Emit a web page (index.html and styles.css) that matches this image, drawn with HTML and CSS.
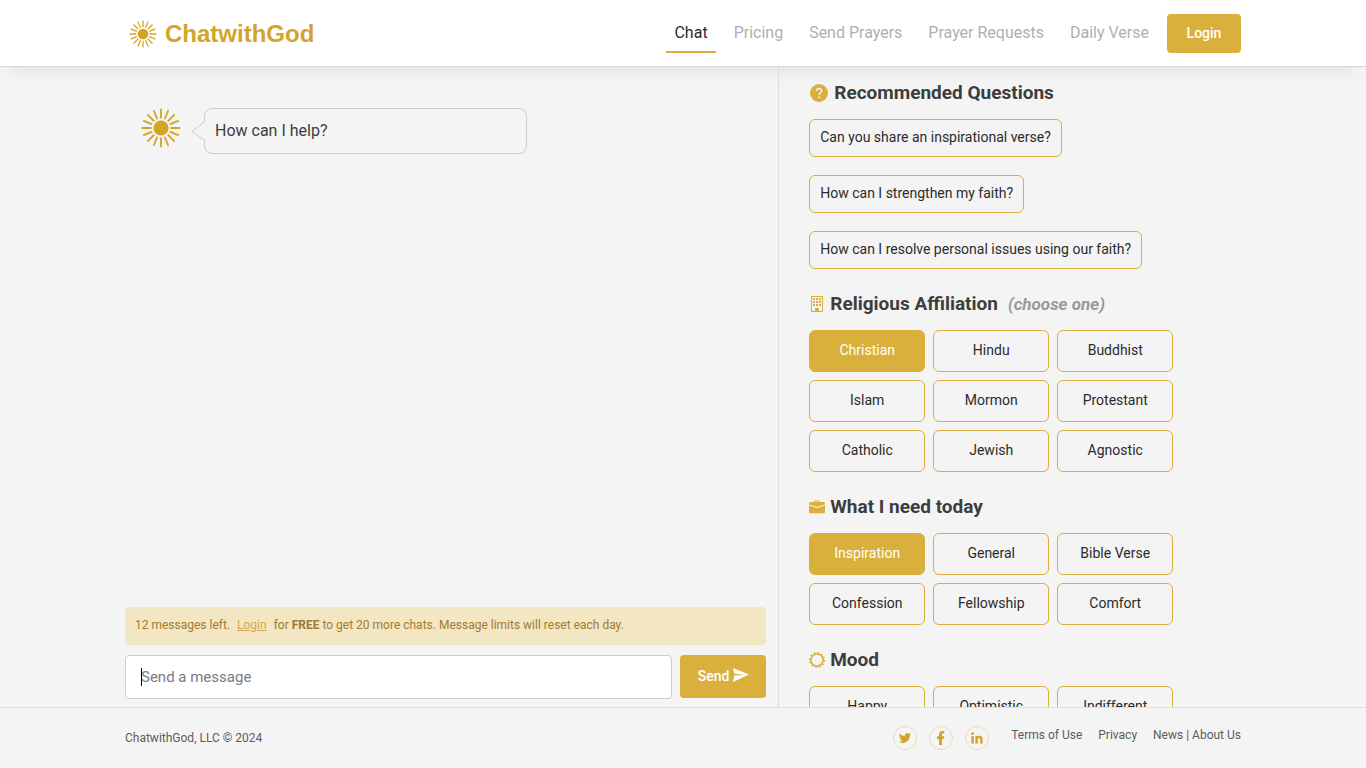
FILE: index.html
```
<!DOCTYPE html>
<html lang="en">
<head>
  <meta charset="UTF-8">
  <meta name="viewport" content="width=device-width, initial-scale=1.0">
  <title>ChatwithGod</title>
  <link rel="stylesheet" href="styles.css">
</head>
<body>
  <svg class="sprite" aria-hidden="true">
    <symbol id="sun" viewBox="0 0 40 40">
      <circle cx="20" cy="20" r="7.6" fill="#d2a424"/>
      <g stroke="#d2a424" stroke-width="1.8">
        <path id="ray" d="M20 .8v9.7M20 29.5v9.7M.8 20h9.7M29.5 20h9.7"/>
        <use href="#ray" transform="rotate(22.5 20 20)"/>
        <use href="#ray" transform="rotate(45 20 20)"/>
        <use href="#ray" transform="rotate(67.5 20 20)"/>
      </g>
    </symbol>
  </svg>

  <header class="header">
    <div class="container header-inner">
      <a href="#" class="logo">
        <svg class="logo-icon"><use href="#sun"/></svg>
        ChatwithGod
      </a>
      <nav class="nav">
        <a href="#" class="nav-link active">Chat</a>
        <a href="#" class="nav-link">Pricing</a>
        <a href="#" class="nav-link">Send Prayers</a>
        <a href="#" class="nav-link">Prayer Requests</a>
        <a href="#" class="nav-link">Daily Verse</a>
        <button type="button" class="btn btn-login">Login</button>
      </nav>
    </div>
  </header>

  <main class="container main">
    <section class="chat">
      <div class="message">
        <svg class="avatar"><use href="#sun"/></svg>
        <div class="bubble">
          <svg class="bubble-arrow" viewBox="0 0 14 20"><path d="M14 .5L.8 10.5L14 19.5" fill="#f4f4f4" stroke="#ccc"/></svg>
          How can I help?
        </div>
      </div>

      <div class="composer">
        <p class="notice">12 messages left. <a href="#">Login</a> for <b>FREE</b> to get 20 more chats. Message limits will reset each day.</p>
        <form class="send-form">
          <div class="send-field">
            <input type="text" class="send-input" placeholder="Send a message" aria-label="Send a message">
          </div>
          <button type="button" class="btn btn-send">Send
            <svg width="16" height="14" viewBox="0 0 16 14"><path d="M0 0L16 6.6L0 14L1.2 7.6L12 6.9L1.2 5.8z" fill="#fff"/></svg>
          </button>
        </form>
      </div>
    </section>

    <aside class="options">
      <h2 class="title title-questions">
        <svg width="18" height="18" viewBox="0 0 18 18"><circle cx="9" cy="9" r="9" fill="#dab03c"/><path d="M6.4 7.1C6.4 3.6 11.6 3.7 11.6 6.8C11.6 8.7 9.1 8.8 9.1 10.9" fill="none" stroke="#f4f4f4" stroke-width="1.5"/><circle cx="9.1" cy="13.2" r="1" fill="#f4f4f4"/></svg>
        Recommended Questions
      </h2>
      <div class="questions">
        <button type="button" class="option">Can you share an inspirational verse?</button>
        <button type="button" class="option">How can I strengthen my faith?</button>
        <button type="button" class="option">How can I resolve personal issues using our faith?</button>
      </div>

      <h2 class="title">
        <svg width="16" height="16" viewBox="0 0 16 16" fill="#dab03c"><path fill-rule="evenodd" d="M2 0h12v16H2zM3 1v14h3v-3h4v3h3V1z"/><path d="M4 2h2v2H4zM7 2h2v2H7zM10 2h2v2h-2zM4 5h2v2H4zM7 5h2v2H7zM10 5h2v2h-2zM4 8h2v2H4zM7 8h2v2H7zM10 8h2v2h-2z"/></svg>
        Religious Affiliation <em>(choose one)</em>
      </h2>
      <div class="grid">
        <button type="button" class="option selected">Christian</button>
        <button type="button" class="option">Hindu</button>
        <button type="button" class="option">Buddhist</button>
        <button type="button" class="option">Islam</button>
        <button type="button" class="option">Mormon</button>
        <button type="button" class="option">Protestant</button>
        <button type="button" class="option">Catholic</button>
        <button type="button" class="option">Jewish</button>
        <button type="button" class="option">Agnostic</button>
      </div>

      <h2 class="title">
        <svg width="16" height="16" viewBox="0 0 16 16" fill="#dab03c"><path d="M5 3V2.5Q5 1.5 6 1.5H10Q11 1.5 11 2.5V3H14.5Q16 3 16 4.5V5.6L8 8L0 5.6V4.5Q0 3 1.5 3zM6 3h4v-.6H6z" fill-rule="evenodd"/><path d="M0 6.6L8 9L16 6.6V13Q16 14.3 14.7 14.3H1.3Q0 14.3 0 13z"/></svg>
        What I need today
      </h2>
      <div class="grid">
        <button type="button" class="option selected">Inspiration</button>
        <button type="button" class="option">General</button>
        <button type="button" class="option">Bible Verse</button>
        <button type="button" class="option">Confession</button>
        <button type="button" class="option">Fellowship</button>
        <button type="button" class="option">Comfort</button>
      </div>

      <h2 class="title">
        <svg width="16" height="16" viewBox="0 0 16 16" fill="none" stroke="#dab03c"><circle cx="8" cy="8" r="6" stroke-width="1.5"/><circle cx="8" cy="8" r="7.2" stroke-width="1.6" stroke-dasharray="1.9 1.87"/></svg>
        Mood
      </h2>
      <div class="grid">
        <button type="button" class="option">Happy</button>
        <button type="button" class="option">Optimistic</button>
        <button type="button" class="option">Indifferent</button>
      </div>
    </aside>
  </main>

  <footer class="footer">
    <div class="container footer-inner">
      <span>ChatwithGod, LLC © 2024</span>
      <div class="footer-right">
        <div class="social">
          <a href="#" aria-label="Twitter"><svg width="12" height="12" viewBox="0 0 24 24"><path d="M24 4.6a10 10 0 0 1-2.8.8 5 5 0 0 0 2.1-2.7 10 10 0 0 1-3.1 1.2 4.9 4.9 0 0 0-8.4 4.5A14 14 0 0 1 1.7 3.1a4.9 4.9 0 0 0 1.5 6.6 5 5 0 0 1-2.2-.6 4.9 4.9 0 0 0 3.9 4.9 5 5 0 0 1-2.2.1 4.9 4.9 0 0 0 4.6 3.4A9.9 9.9 0 0 1 0 19.5a14 14 0 0 0 21.5-12.4A10 10 0 0 0 24 4.6z"/></svg></a>
          <a href="#" aria-label="Facebook"><svg width="8" height="14" viewBox="0 0 8 14"><path d="M2 14V8H0V5.2H2V3.6C2 1.3 3.3 0 5.3 0H7.2V2.6H6C5.1 2.6 4.9 3.1 4.9 3.8V5.2H7.2L6.8 8H4.9V14z"/></svg></a>
          <a href="#" aria-label="LinkedIn"><svg width="12" height="12" viewBox="0 0 12 12"><circle cx="1.6" cy="1.7" r="1.4"/><path d="M.4 4h2.4v7.6H.4zM4.4 4h2.3v1C7.8 3.2 11.6 3.2 11.6 7v4.6H9.2V7.6C9.2 5.3 6.8 5.4 6.8 7.6v4H4.4z"/></svg></a>
        </div>
        <nav class="footer-links">
          <a href="#">Terms of Use</a>
          <a href="#">Privacy</a>
          <span><a href="#">News</a> | <a href="#">About Us</a></span>
        </nav>
      </div>
    </div>
  </footer>
</body>
</html>
```
FILE: styles.css
```
* {
  box-sizing: border-box;
}
body {
  margin: 0;
  height: 100vh;
  display: flex;
  flex-direction: column;
  background: #f4f4f4;
  color: #3d3d3d;
  font-family: Roboto, sans-serif;
  font-size: 16px;
  line-height: 24px;
}
a {
  color: inherit;
  text-decoration: none;
}
button, input {
  font-family: inherit;
}
.sprite {
  position: absolute;
  width: 0;
  height: 0;
}
.container {
  width: 100%;
  max-width: 1140px;
  margin: 0 auto;
  padding: 0 12px;
}

/* header */
.header {
  background: #fff;
  border-bottom: 1px solid #d8d8d8;
  box-shadow: 0 16px 16px -12px rgba(0, 0, 0, 0.08);
}
.header-inner {
  display: flex;
  justify-content: space-between;
  align-items: center;
  height: 66px;
}
.logo {
  display: flex;
  align-items: center;
  gap: 8px;
  padding: 2px 0 0 4px;
  color: #d2a42c;
  font: bold 24px/28px "Liberation Sans", sans-serif;
}
.logo-icon {
  width: 28px;
  height: 28px;
}
.nav {
  display: flex;
  align-items: center;
  gap: 10px;
}
.nav-link {
  padding: 8px 8px 6px;
  border-bottom: 2px solid transparent;
  color: #b0b0b0;
}
.nav-link.active {
  color: #2b2b2b;
  border-color: #dab03c;
}
.btn {
  border: none;
  border-radius: 4px;
  background: #dab03c;
  color: #fff;
  font-size: 14px;
  font-weight: 500;
  cursor: pointer;
}
.btn-login {
  width: 74px;
  height: 39px;
}

/* chat */
.main {
  flex: 1;
  min-height: 0;
  display: flex;
  padding-right: 0;
}
.chat {
  width: 58%;
  display: flex;
  flex-direction: column;
  justify-content: space-between;
  padding: 41px 12px 8px 0;
  border-right: 1px solid #ddd;
}
.message {
  display: flex;
  gap: 23px;
  padding-left: 16px;
}
.avatar {
  width: 40px;
  height: 40px;
}
.bubble {
  position: relative;
  width: 323px;
  padding: 10px;
  border: 1px solid #ccc;
  border-radius: 8px;
}
.bubble-arrow {
  position: absolute;
  left: -14px;
  top: 12px;
  width: 14px;
  height: 20px;
}
.notice {
  margin: 0 0 10px;
  padding: 6px 10px 8px;
  border-radius: 4px;
  background: #f2e6c3;
  color: #a37a35;
  font-size: 12px;
}
.notice a {
  margin: 0 4px;
  color: #d6a84e;
  text-decoration: underline;
}
.send-form {
  display: flex;
  gap: 8px;
}
.send-field {
  position: relative;
  flex: 1;
}
/* text cursor */
.send-field::after {
  content: "";
  position: absolute;
  left: 16px;
  top: 13px;
  width: 1px;
  height: 18px;
  background: #000;
}
.send-field:focus-within::after {
  display: none;
}
.send-input {
  display: block;
  width: 100%;
  height: 44px;
  padding: 0 15px;
  border: 1px solid #ccc;
  border-radius: 4px;
  background: #fff;
  font-size: 15px;
  outline: none;
}
.send-input::placeholder {
  color: #7b7b80;
}
.btn-send {
  width: 86px;
  height: 43px;
  padding: 0 0 2px;
}
.btn-send svg {
  vertical-align: -1px;
}

/* options */
.options {
  flex: 1;
  padding: 13px 12px 0 30px;
  overflow: hidden;
}
.title {
  display: flex;
  align-items: center;
  gap: 5px;
  margin: 0 0 13px;
  font-size: 19px;
  font-weight: 700;
  line-height: 26px;
}
.title em {
  margin-left: 5px;
  color: #999;
  font-size: 17px;
}
.title-questions {
  gap: 6px;
  padding-left: 1px;
}
.questions {
  display: flex;
  flex-direction: column;
  align-items: flex-start;
  gap: 18px;
  margin-bottom: 22px;
}
.option {
  height: 42px;
  padding: 0 10px 2px;
  border: 1px solid #dab03c;
  border-radius: 6px;
  background: transparent;
  color: #2b2b2b;
  font-size: 14px;
  cursor: pointer;
}
.questions .option {
  height: 38px;
}
.grid {
  display: grid;
  grid-template-columns: repeat(3, 116px);
  gap: 8px;
  margin-bottom: 22px;
}
.option.selected {
  background: #dab03c;
  color: #fff;
}

/* footer */
.footer {
  border-top: 1px solid #e0e0e0;
  color: #5c5c5c;
  font-size: 12px;
}
.footer-inner {
  display: flex;
  justify-content: space-between;
  align-items: center;
  height: 60px;
}
.footer-right {
  display: flex;
  gap: 22px;
}
.social {
  display: flex;
  gap: 12px;
}
.social a {
  display: flex;
  align-items: center;
  justify-content: center;
  width: 24px;
  height: 24px;
  border: 1px solid #ecdcb4;
  border-radius: 50%;
}
.social svg {
  fill: #d2a42c;
}
.footer-links {
  display: flex;
  gap: 16px;
  line-height: 18px;
}
```
